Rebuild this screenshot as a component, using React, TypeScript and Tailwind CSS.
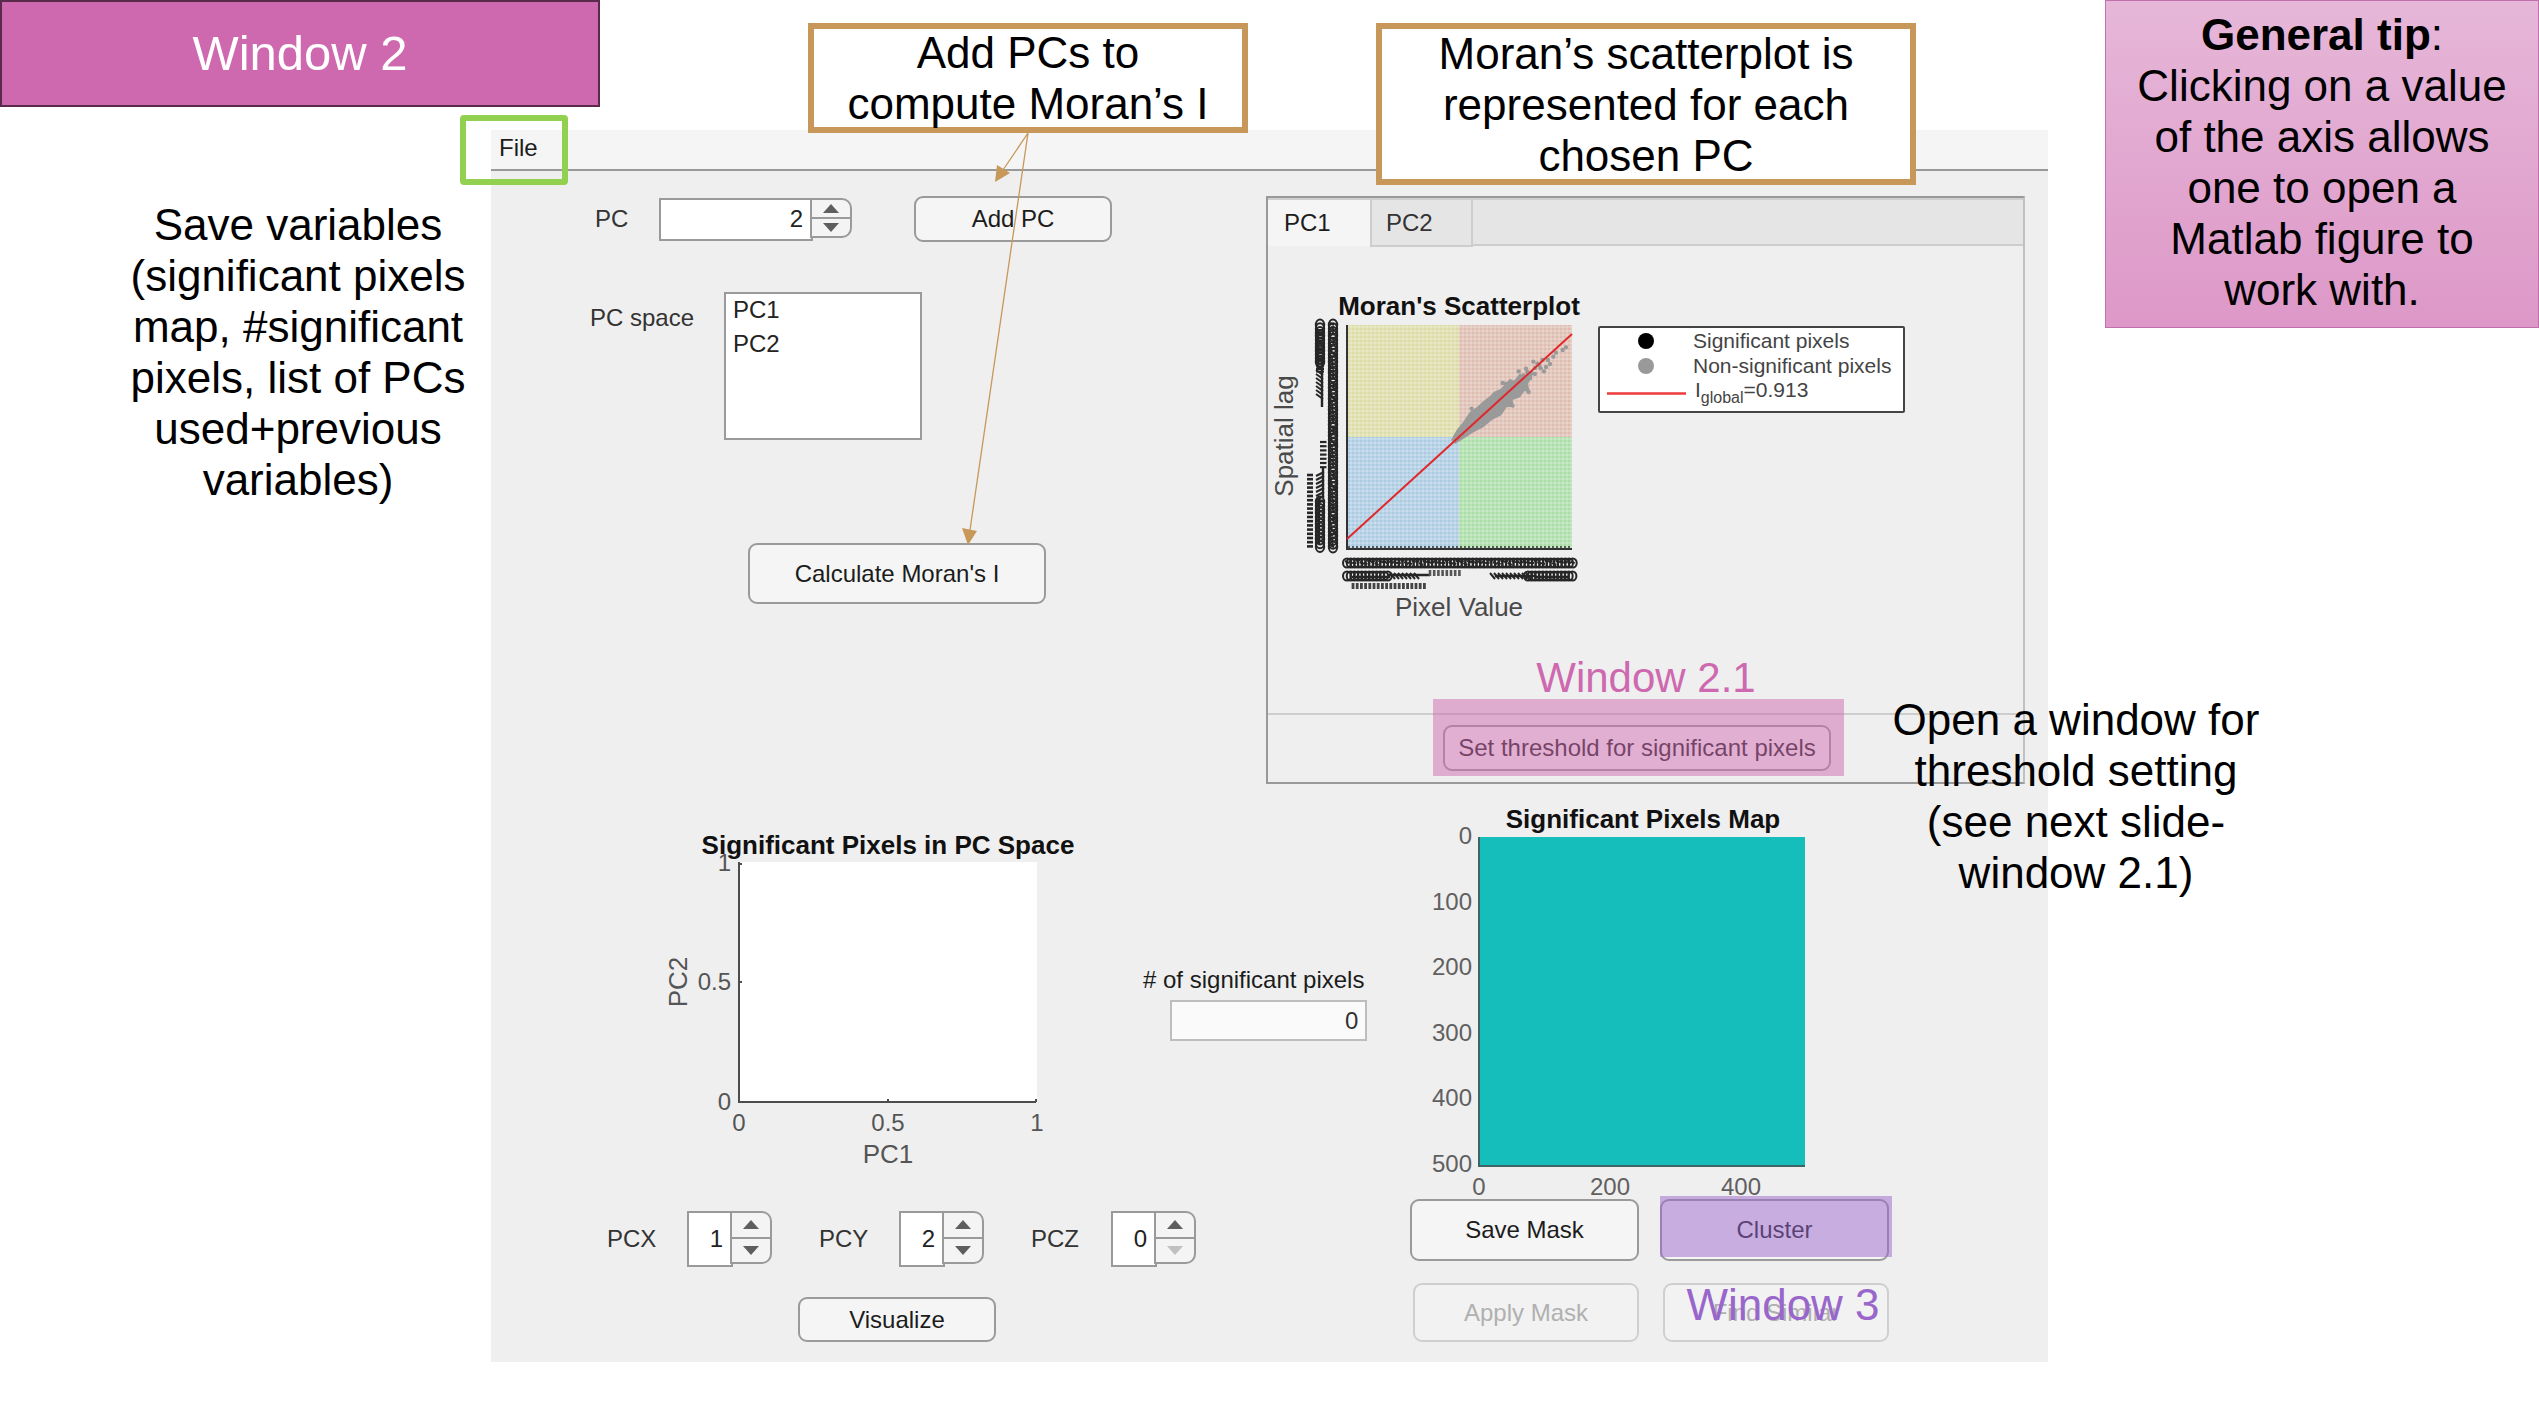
import React from 'react';

const UI_FONT = "font-['Liberation_Sans',Arial,sans-serif]";

function PushButton({
  children,
  className,
  disabled = false,
}: {
  children: React.ReactNode;
  className: string;
  disabled?: boolean;
}) {
  return (
    <button
      type="button"
      disabled={disabled}
      className={`flex items-center justify-center rounded-[9px] border-2 text-2xl leading-6 ${
        disabled
          ? 'border-[#cfcfcf] bg-[#f2f2f2] text-[#b0b0b0]'
          : 'border-[#9a9a9a] bg-[#f5f5f5] text-[#1c1c1c]'
      } ${className}`}
    >
      {children}
    </button>
  );
}

function Spinner({
  id,
  label,
  value,
  inputClass,
  stepperClass,
  downDisabled = false,
}: {
  id: string;
  label: string;
  value: string;
  inputClass: string;
  stepperClass: string;
  downDisabled?: boolean;
}) {
  return (
    <div className="flex items-start">
      <input
        id={id}
        type="text"
        defaultValue={value}
        className={`border-2 border-[#9a9a9a] bg-white pr-2 text-right text-2xl text-[#222] outline-none ${inputClass}`}
      />
      <div
        className={`-ml-[3px] flex w-[42px] flex-col overflow-hidden rounded-r-[10px] border-2 border-[#9a9a9a] bg-[#f4f4f4] ${stepperClass}`}
      >
        <button
          type="button"
          aria-label={`Increase ${label}`}
          className="flex flex-1 items-center justify-center border-b-2 border-[#9a9a9a]"
        >
          <svg width="16" height="9" viewBox="0 0 16 9">
            <path d="M8 0 16 9H0Z" fill="#5e5e5e" />
          </svg>
        </button>
        <button
          type="button"
          aria-label={`Decrease ${label}`}
          disabled={downDisabled}
          className="flex flex-1 items-center justify-center"
        >
          <svg width="16" height="9" viewBox="0 0 16 9">
            <path d="M0 0H16L8 9Z" fill={downDisabled ? '#c0c0c0' : '#5e5e5e'} />
          </svg>
        </button>
      </div>
    </div>
  );
}

const range = (from: number, to: number, step: number) => {
  const out: number[] = [];
  for (let v = from; v <= to; v += step) out.push(v);
  return out;
};

const cloudDots: [number, number][] = [
  [686, 184], [638, 219], [668, 287], [730, 155], [742, 161], [757, 150], [748, 167],
  [735, 174], [762, 184], [752, 175], [774, 150], [780, 162], [790, 140], [798, 128],
  [818, 120], [828, 112], [725, 190], [768, 171], [735, 192], [648, 222], [700, 196],
  [712, 186], [655, 283], [716, 246], [545, 296], [720, 205], [708, 176],
];

function CrowdedTicks() {
  return (
    <g fill="none" stroke="#262626" strokeWidth="2">
      {range(325, 547, 3.7).map((y, i) => (
        <g key={`a${i}`}>
          <ellipse cx="1333" cy={y} rx="4.2" ry="5.5" />
          <path d={`M${1330 + (i % 3)} ${y - 2}l${4 - (i % 4)} ${2 + (i % 3)}`} />
        </g>
      ))}
      {range(325, 362, 3.7).map((y, i) => (
        <ellipse key={`b${i}`} cx="1320" cy={y} rx="4.2" ry="5.5" />
      ))}
      {range(330, 372, 2.6).map((y, i) => (
        <path key={`c${i}`} d={`M1316 ${y}h8`} />
      ))}
      {range(370, 396, 4).map((y, i) => (
        <path key={`d${i}`} d={`M1316 ${y}l7 5`} />
      ))}
      <path d="M1322 355v52M1318 330v40M1323 468v30M1319 498v46" strokeWidth="2.4" />
      {range(442, 470, 4.2).map((y, i) => (
        <path key={`e${i}`} d={`M1320 ${y}h6.5`} strokeWidth="2.2" />
      ))}
      {range(472, 500, 4).map((y, i) => (
        <path key={`f${i}`} d={`M1316 ${y + 4}l8 -4`} />
      ))}
      {range(502, 547, 3.7).map((y, i) => (
        <ellipse key={`g${i}`} cx="1320" cy={y} rx="4.2" ry="5.5" />
      ))}
      {range(475, 549, 4.2).map((y, i) => (
        <path key={`h${i}`} d={`M1307 ${y}h6`} strokeWidth="2.6" />
      ))}
      {range(1347, 1573, 3.7).map((x, i) => (
        <g key={`i${i}`}>
          <ellipse cx={x} cy="563" rx="4" ry="4.6" />
          <path d={`M${x - 2} ${561 + (i % 3)}l4 ${2 - (i % 4)}`} />
        </g>
      ))}
      {range(1347, 1388, 3.7).map((x, i) => (
        <ellipse key={`j${i}`} cx={x} cy="576" rx="4" ry="4.6" />
      ))}
      {range(1390, 1416, 4).map((x, i) => (
        <path key={`k${i}`} d={`M${x} 573l5 6`} />
      ))}
      <path d="M1352 577h38M1388 575h42M1495 576h40M1535 577h34" strokeWidth="2.6" />
      {range(1430, 1460, 4.2).map((x, i) => (
        <path key={`l${i}`} d={`M${x} 570v6`} strokeWidth="2.6" stroke="#555" />
      ))}
      {range(1490, 1526, 4).map((x, i) => (
        <path key={`m${i}`} d={`M${x} 573l5 6`} />
      ))}
      {range(1528, 1573, 3.7).map((x, i) => (
        <ellipse key={`n${i}`} cx={x} cy="576" rx="4" ry="4.6" />
      ))}
      {range(1353, 1427, 4.2).map((x, i) => (
        <path key={`o${i}`} d={`M${x} 583v6`} strokeWidth="2.8" stroke="#444" />
      ))}
    </g>
  );
}

function MoranPlot() {
  return (
    <svg
      width="640"
      height="350"
      viewBox="1270 290 640 350"
      role="img"
      aria-label="Moran's Scatterplot"
      className={`shrink-0 ${UI_FONT}`}
    >
      <text x="1459" y="315" textAnchor="middle" fontSize="26" fontWeight="700" fill="#111">
        Moran's Scatterplot
      </text>
      <rect x="1347" y="325" width="112" height="112" fill="#dcdca6" />
      <rect x="1459" y="325" width="113" height="112" fill="#ddbdb0" />
      <rect x="1347" y="437" width="112" height="112" fill="#abcbe2" />
      <rect x="1459" y="437" width="113" height="112" fill="#aadda8" />
      <g stroke="#fff" strokeOpacity="0.28" strokeWidth="1.4">
        {range(1351, 1571, 4).map((x) => (
          <path key={x} d={`M${x} 325v224`} />
        ))}
        {range(327, 547, 4).map((y) => (
          <path key={y} d={`M1347 ${y}h225`} />
        ))}
      </g>
      <g transform="translate(1290 310) scale(0.3333)" fill="#9a9a9a">
        <path d="M483 390 500 360 520 335 540 305 562 290 578 275 600 258 612 245 632 237 645 222 660 206 672 212 690 190 700 200 720 184 730 178 726 200 714 222 720 248 704 243 690 262 668 270 672 290 650 292 634 316 606 330 580 352 548 368 518 388 496 401Z" />
        {cloudDots.map(([x, y]) => (
          <circle key={`${x}-${y}`} cx={x} cy={y} r="6.5" />
        ))}
      </g>
      <path d="M1347 325V549H1572" fill="none" stroke="#333" strokeWidth="2" />
      <path d="M1348 547H1572" stroke="#333" strokeWidth="1.5" strokeDasharray="2 2" />
      <path d="M1347 539 1572 334" stroke="#e0282b" strokeWidth="2" />
      <CrowdedTicks />
      <text x="1459" y="616" textAnchor="middle" fontSize="26" fill="#4a4a4a">
        Pixel Value
      </text>
      <text
        transform="translate(1293 436) rotate(-90)"
        textAnchor="middle"
        fontSize="26"
        fill="#4a4a4a"
      >
        Spatial lag
      </text>
      <rect x="1599" y="327" width="305" height="85" rx="1" fill="#fff" stroke="#444" strokeWidth="2" />
      <circle cx="1646" cy="341" r="8" fill="#000" />
      <circle cx="1646" cy="366" r="8" fill="#999" />
      <path d="M1607 393.5H1686" stroke="#ee3a3a" strokeWidth="2.5" />
      <g fontSize="21" fill="#444">
        <text x="1693" y="348">Significant pixels</text>
        <text x="1693" y="373">Non-significant pixels</text>
        <text x="1695" y="397">
          I
          <tspan fontSize="16" dy="6">global</tspan>
          <tspan dy="-6">=0.913</tspan>
        </text>
      </g>
    </svg>
  );
}

function PcSpacePlot() {
  return (
    <svg
      width="440"
      height="350"
      viewBox="660 830 440 350"
      role="img"
      aria-label="Significant Pixels in PC Space"
      className={`shrink-0 ${UI_FONT}`}
    >
      <rect x="739" y="862" width="298" height="240" fill="#fff" />
      <path d="M739 862V1102H1036M739 982h3M888 1102v-3M1036 1102v-3M739 864h3" fill="none" stroke="#4d4d4d" strokeWidth="2" />
      <g fontSize="24" fill="#555">
        <text x="731" y="871" textAnchor="end">1</text>
        <text x="731" y="990" textAnchor="end">0.5</text>
        <text x="731" y="1110" textAnchor="end">0</text>
        <text x="739" y="1131" textAnchor="middle">0</text>
        <text x="888" y="1131" textAnchor="middle">0.5</text>
        <text x="1037" y="1131" textAnchor="middle">1</text>
      </g>
      <g fontSize="26" fill="#555" textAnchor="middle">
        <text x="888" y="1163">PC1</text>
        <text transform="translate(687 982) rotate(-90)">PC2</text>
      </g>
      <text x="888" y="854" textAnchor="middle" fontSize="26" fontWeight="700" fill="#111">
        Significant Pixels in PC Space
      </text>
    </svg>
  );
}

function PixelMap() {
  return (
    <svg
      width="420"
      height="394"
      viewBox="1410 805 420 394"
      role="img"
      aria-label="Significant Pixels Map"
      className={UI_FONT}
    >
      <text x="1643" y="828" textAnchor="middle" fontSize="26" fontWeight="700" fill="#111">
        Significant Pixels Map
      </text>
      <rect x="1479" y="837" width="326" height="330" fill="#15beba" />
      <path d="M1479 837V1166H1805" fill="none" stroke="#3f6464" strokeWidth="2" />
      <g fontSize="24" fill="#606060">
        {[0, 100, 200, 300, 400, 500].map((v, i) => (
          <text key={v} x="1472" y={844 + Math.round(i * 65.6)} textAnchor="end">
            {v}
          </text>
        ))}
        {[0, 200, 400].map((v, i) => (
          <text key={v} x={1479 + i * 131} y="1195" textAnchor="middle">
            {v}
          </text>
        ))}
      </g>
    </svg>
  );
}

function Arrows() {
  return (
    <svg
      width="120"
      height="430"
      viewBox="940 130 120 430"
      aria-hidden="true"
      className="pointer-events-none absolute top-0 left-[449px]"
    >
      <path d="M1028 133 1003 170M1028 133 970 530" stroke="#c8975a" strokeWidth="1.3" />
      <path d="M995 182 997 165 1010 173ZM968 545 962 528 977 531Z" fill="#c8975a" />
    </svg>
  );
}

function Callout({ children, className }: { children: React.ReactNode; className: string }) {
  return (
    <div
      className={`absolute flex items-center justify-center border-[6px] border-[#c8975a] bg-white text-center text-[44px] leading-[51px] text-black ${className}`}
    >
      {children}
    </div>
  );
}

function AppWindow() {
  return (
    <main className="relative mt-[130px] min-w-0 bg-[#efefef]">
      <nav className="flex h-[41px] border-b-2 border-[#999] bg-[#f5f5f5] pt-1 pl-2 text-2xl leading-7 text-[#1c1c1c]">
        <button type="button" className="h-7">File</button>
      </nav>

      <section className="grid grid-cols-[775fr_759fr] pr-[23px]">
        <div className="min-w-0 pt-[25px] text-[#333]">
          <div className="flex items-center pl-[104px] text-2xl">
            <label htmlFor="pc" className="w-16">
              PC
            </label>
            <Spinner id="pc" label="PC" value="2" inputClass="h-[43px] w-[154px]" stepperClass="h-10" />
            <PushButton className="ml-[62px] h-[46px] w-[198px]">Add PC</PushButton>
          </div>
          <div className="mt-[50px] flex pl-[99px] text-2xl leading-6">
            <label htmlFor="pc-space" className="w-[134px] pt-[14px]">
              PC space
            </label>
            <select
              id="pc-space"
              multiple
              size={4}
              className="h-[148px] w-[198px] appearance-none overflow-hidden rounded-none border-2 border-[#9a9a9a] bg-white p-0 text-2xl text-[#222] outline-none"
            >
              <option className="h-[34px] px-[7px] pt-[2px] pb-0 leading-[28px]">PC1</option>
              <option className="h-[34px] px-[7px] pt-[2px] pb-0 leading-[28px]">PC2</option>
            </select>
          </div>
          <PushButton className="mt-[103px] ml-[257px] h-[61px] w-[298px]">
            Calculate Moran's I
          </PushButton>
        </div>

        <div className="mt-[25px] min-w-0 border-2 border-[#999] border-r-[#c0c0c0] text-2xl">
          <div role="tablist" className="flex h-12 border-t-2 border-b-2 border-t-[#cfcfcf] border-b-[#cdcdcd] bg-[#e5e5e5]">
            <button
              type="button"
              role="tab"
              aria-selected="true"
              className="-mb-[2px] w-[102px] bg-[#f5f5f5] pl-4 text-left text-[#1c1c1c]"
            >
              PC1
            </button>
            <button
              type="button"
              role="tab"
              aria-selected="false"
              className="-mb-[3px] w-[103px] border-2 border-t-0 border-[#cdcdcd] bg-[#e5e5e5] pl-[14px] text-left text-[#333]"
            >
              PC2
            </button>
          </div>
          <div role="tabpanel" className="flex h-[469px] items-start border-b-2 border-[#cdcdcd] pt-11 pl-[2px]">
            <MoranPlot />
          </div>
          <div className="flex pt-[10px] pb-[11px] pl-[175px]">
            <div className="relative">
              <PushButton className="h-[46px] w-[388px]">Set threshold for significant pixels</PushButton>
              <div className="pointer-events-none absolute -top-[26px] -left-[10px] h-[77px] w-[411px] bg-[#ce69b0]/50" />
              <p className="absolute -top-[70px] left-0 w-full pl-[18px] text-center text-[42px] leading-[46px] text-[#ce69b0]">
                Window 2.1
              </p>
            </div>
          </div>
        </div>
      </section>

      <section className="grid grid-cols-[919fr_638fr] pb-5">
        <div className="min-w-0 pt-[46px]">
          <div className="flex items-start pl-[169px]">
            <PcSpacePlot />
            <div className="ml-[43px] flex flex-col items-end pt-[138px] text-2xl leading-6 text-[#1c1c1c]">
              <label htmlFor="count" className="pr-[3px] whitespace-nowrap">
                # of significant pixels
              </label>
              <input
                id="count"
                type="text"
                readOnly
                defaultValue="0"
                className="mt-2 h-[41px] w-[197px] border-2 border-[#bdbdbd] bg-[#fafafa] pr-[7px] text-right text-[#333] outline-none"
              />
            </div>
          </div>
          <div className="mt-[31px] flex gap-[47px] pl-[116px] text-2xl text-[#333]">
            <div className="flex items-center">
              <label htmlFor="pcx" className="w-20">PCX</label>
              <Spinner id="pcx" label="PCX" value="1" inputClass="h-14 w-[46px]" stepperClass="h-[53px]" />
            </div>
            <div className="flex items-center">
              <label htmlFor="pcy" className="w-20">PCY</label>
              <Spinner id="pcy" label="PCY" value="2" inputClass="h-14 w-[46px]" stepperClass="h-[53px]" />
            </div>
            <div className="flex items-center">
              <label htmlFor="pcz" className="w-20">PCZ</label>
              <Spinner id="pcz" label="PCZ" value="0" inputClass="h-14 w-[46px]" stepperClass="h-[53px]" downDisabled />
            </div>
          </div>
          <PushButton className="mt-[30px] ml-[307px] h-[45px] w-[198px]">Visualize</PushButton>
        </div>

        <div className="min-w-0 pt-[21px]">
          <PixelMap />
          <div className="flex gap-[21px]">
            <PushButton className="h-[62px] w-[229px]">Save Mask</PushButton>
            <div className="relative">
              <PushButton className="h-[62px] w-[229px]">Cluster</PushButton>
              <div className="pointer-events-none absolute -top-[3px] left-0 h-[61px] w-[232px] bg-[#9966cc]/50" />
            </div>
          </div>
          <div className="mt-[22px] flex gap-6 pl-[3px]">
            <PushButton disabled className="h-[59px] w-[226px]">Apply Mask</PushButton>
            <div className="relative">
              <PushButton disabled className="h-[59px] w-[226px]">Find Similar</PushButton>
              <p className="pointer-events-none absolute -top-1 left-0 w-full pl-[14px] text-center text-[44px] leading-[51px] whitespace-nowrap text-[#9966cc]">
                Window 3
              </p>
            </div>
          </div>
        </div>
      </section>

      <Callout className="-top-[107px] left-[317px] h-[110px] w-[440px]">
        <p>
          Add PCs to
          <br />
          compute Moran’s I
        </p>
      </Callout>
      <Callout className="-top-[107px] left-[885px] h-[162px] w-[540px]">
        <p className="px-10">Moran’s scatterplot is represented for each chosen PC</p>
      </Callout>
      <Arrows />
      <div className="pointer-events-none absolute -top-[15px] -left-[31px] h-[70px] w-[108px] rounded-[4px] border-[6px] border-[#92d050]" />
    </main>
  );
}

export default function App() {
  return (
    <div className={`grid min-h-screen grid-cols-[491fr_1557fr_491fr] items-start bg-white ${UI_FONT}`}>
      <aside className="min-w-0">
        <h1 className="flex h-[107px] w-[600px] items-center justify-center border-2 border-[#5a2a4b] bg-[#ce69b0] text-[49px] text-white">
          Window 2
        </h1>
        <p className="mt-[92px] ml-[123px] w-[350px] text-center text-[44px] leading-[51px] text-black">
          Save variables (significant pixels map, #significant pixels, list of PCs used+previous
          variables)
        </p>
      </aside>

      <AppWindow />

      <aside className="relative min-w-0 text-center text-[44px] leading-[51px] text-black">
        <p className="ml-[57px] border border-[#c36fae] bg-linear-to-b from-[#e6b7d8] to-[#dd98c8] px-6 pt-2 pb-[12px]">
          <strong>General tip</strong>:<br />
          Clicking on a value of the axis allows one to open a Matlab figure to work with.
        </p>
        <p className="absolute top-[694px] -left-[162px] w-[380px]">
          Open a window for threshold setting (see next slide-window 2.1)
        </p>
      </aside>
    </div>
  );
}
